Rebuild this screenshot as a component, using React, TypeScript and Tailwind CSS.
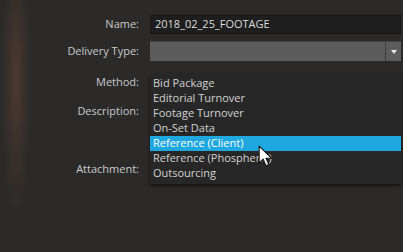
const OPTIONS = [
  'Bid Package',
  'Editorial Turnover',
  'Footage Turnover',
  'On-Set Data',
  'Reference (Client)',
  'Reference (Phosphene)',
  'Outsourcing',
]

function Label({ children }: { children: string }) {
  return (
    <div className="w-[150px] shrink-0 pr-[11px] text-right text-[11px] text-[#c9c9c9]">{children}</div>
  )
}

function Cursor() {
  return (
    <svg className="absolute left-[258px] top-[145px]" width="16" height="23" viewBox="0 0 14 20">
      <path
        d="M1 1 L1 15.5 L4.5 12.2 L7 18 L9.5 17 L7 11.5 L11.8 11.5 Z"
        fill="#fff"
        stroke="#111"
        strokeWidth="0.9"
        strokeLinejoin="round"
      />
    </svg>
  )
}

export default function App() {
  return (
    <div
      className="relative h-[252px] w-[403px] overflow-hidden bg-[#2b2a29] bg-[radial-gradient(ellipse_16px_140px_at_16px_80px,#4e3a31_0%,#3a302b_50%,transparent_100%)]"
      style={{ fontFamily: '"Open Sans", "Liberation Sans", sans-serif' }}
    >
      <div className="flex flex-col pt-[15px]">
        <div className="flex h-[19px] items-center">
          <Label>Name:</Label>
          <div className="mr-[2px] flex h-[19px] flex-1 items-center border border-[#181818] bg-[#1e1e1e] pl-[4px] text-[11px] text-[#dcdcdc]">
            2018_02_25_FOOTAGE
          </div>
        </div>
        <div className="mt-[7px] flex h-[20px] items-center">
          <Label>Delivery Type:</Label>
          <div className="mr-[2px] flex h-[20px] flex-1 border-t border-[#444] bg-[#5c5c5c]">
            <div className="flex-1" />
            <div className="flex w-[16px] items-center justify-center border-l border-[#3e3e3e]">
              <div className="h-0 w-0 border-x-[3.5px] border-t-[4px] border-x-transparent border-t-[#e6e6e6]" />
            </div>
          </div>
        </div>
        <div className="mt-[11px] flex h-[20px] items-center">
          <Label>Method:</Label>
        </div>
        <div className="mt-[9px] flex h-[20px] items-center">
          <Label>Description:</Label>
        </div>
        <div className="mt-[38px] flex h-[20px] items-center">
          <Label>Attachment:</Label>
        </div>
      </div>

      <div className="absolute left-[150px] top-[73px] w-[251px] bg-[#272727] pb-[3px] pt-[3px] shadow-[0_2px_3px_rgba(0,0,0,0.5)]">
        {OPTIONS.map((o) => (
          <div
            key={o}
            className={`flex h-[15px] items-center pl-[3px] text-[11px] ${
              o === 'Reference (Client)' ? 'bg-[#1ea8df] text-white' : 'text-[#d2d2d2]'
            }`}
          >
            {o}
          </div>
        ))}
      </div>
      <Cursor />
    </div>
  )
}
